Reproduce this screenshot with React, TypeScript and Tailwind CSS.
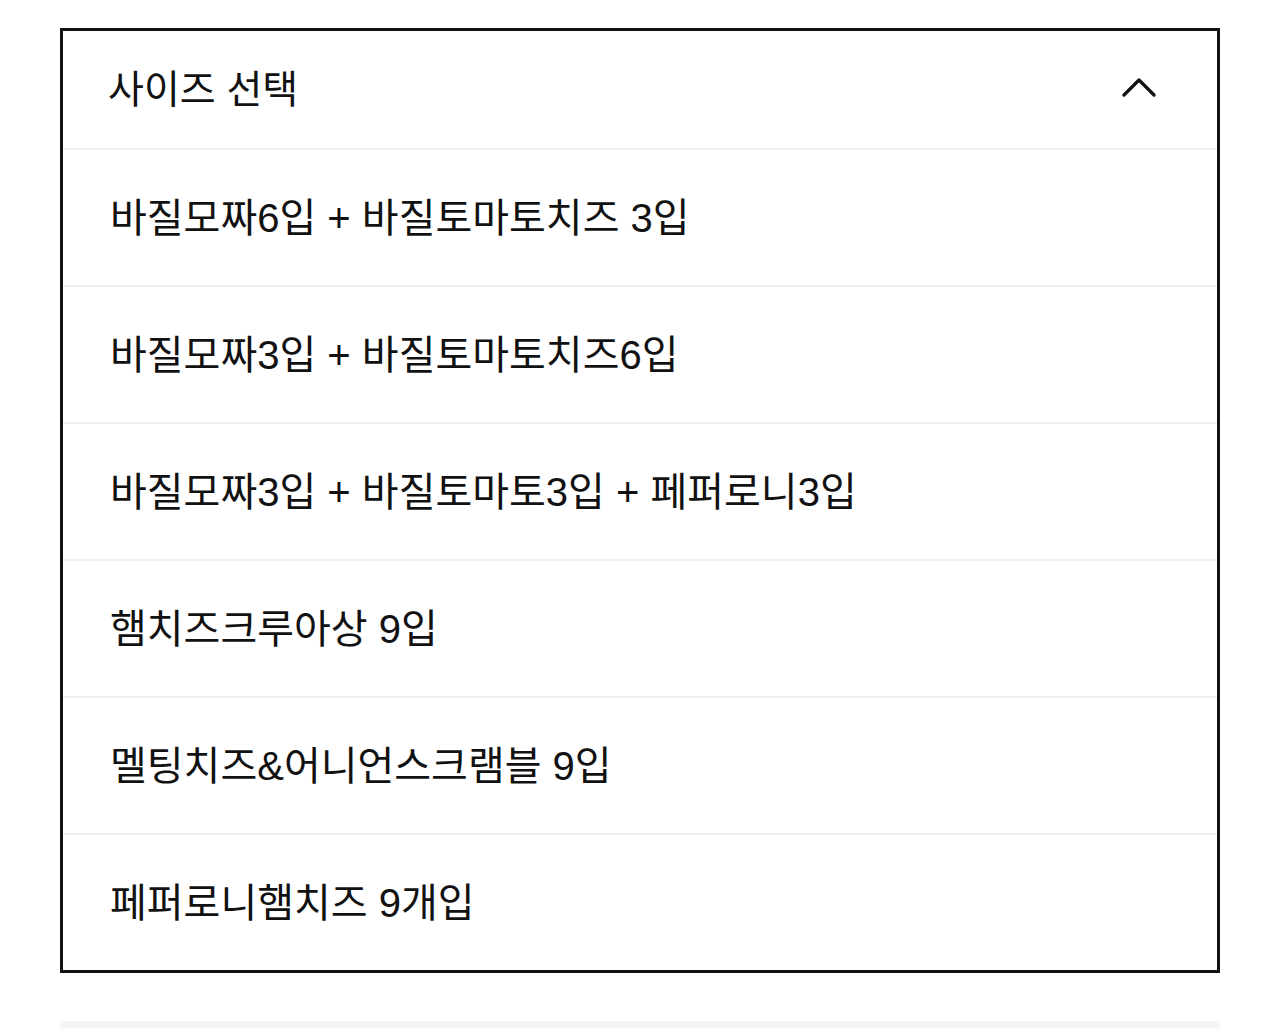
const options = [
  "바질모짜6입 + 바질토마토치즈 3입",
  "바질모짜3입 + 바질토마토치즈6입",
  "바질모짜3입 + 바질토마토3입 + 페퍼로니3입",
  "햄치즈크루아상 9입",
  "멜팅치즈&어니언스크램블 9입",
  "페퍼로니햄치즈 9개입",
];

export default function App() {
  return (
    <div
      className="min-h-[1028px] bg-white pt-[28px] px-[60px] text-[#111111]"
      style={{ fontFamily: '"Liberation Sans", "Noto Sans CJK KR", sans-serif' }}
    >
      <div className="border-[3px] border-[#111111]">
        <div className="flex h-[117px] items-center justify-between pl-[45px] pr-[61px]">
          <span className="text-[39px] leading-none">사이즈 선택</span>
          <svg width="34" height="22" viewBox="0 0 34 22" fill="none" className="-mt-[5px]">
            <path d="M2 19 L17 4 L32 19" stroke="#111111" strokeWidth="3.2" strokeLinecap="round" strokeLinejoin="round" />
          </svg>
        </div>
        {options.map((o) => (
          <div
            key={o}
            className="flex h-[137px] items-center border-t-2 border-[#efefef] pl-[47px]"
          >
            <span className="text-[40px] leading-none">{o}</span>
          </div>
        ))}
      </div>
      <div className="mt-[48px] h-[10px] bg-[#f5f5f5]" />
    </div>
  );
}
